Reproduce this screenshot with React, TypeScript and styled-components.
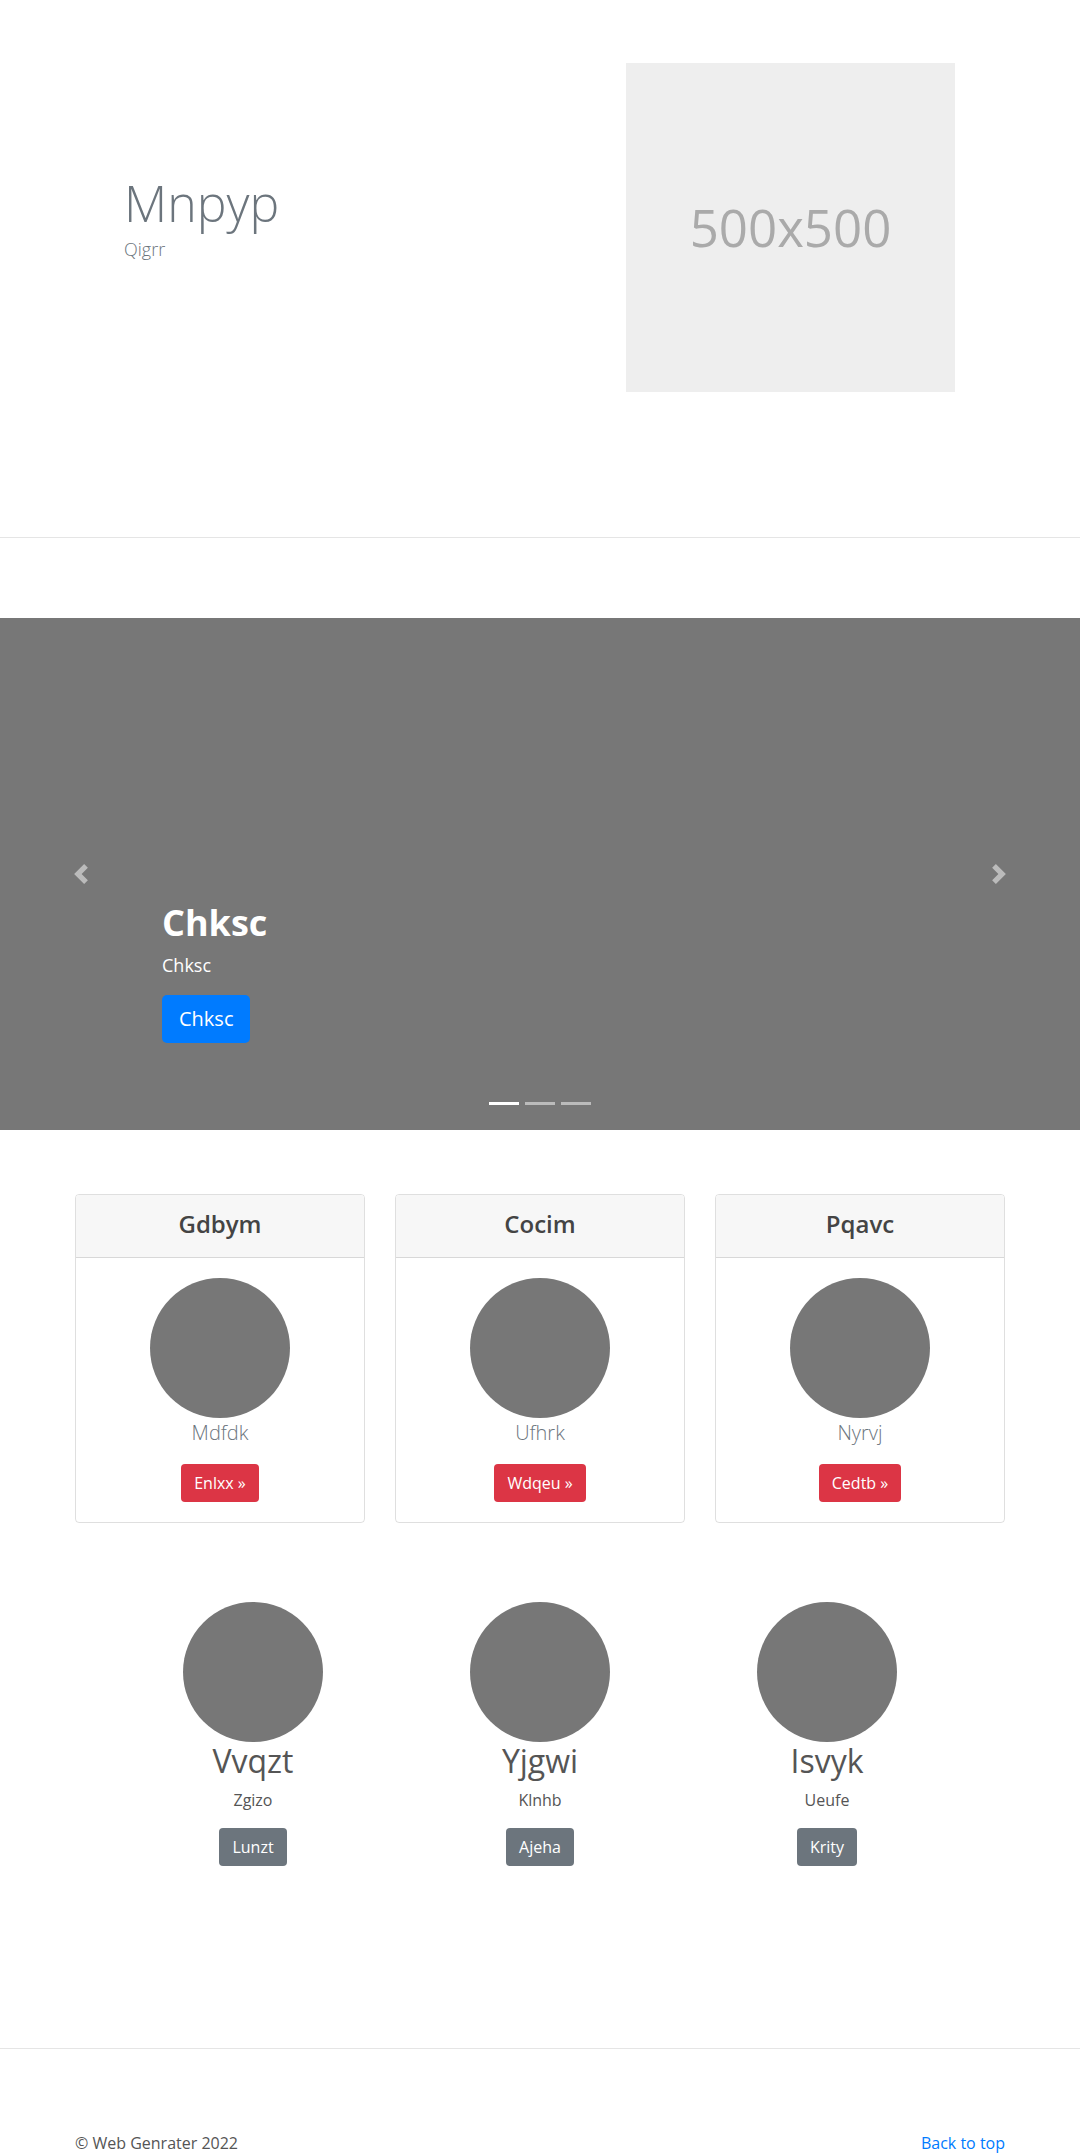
import * as React from 'react'
import styled, { createGlobalStyle } from 'styled-components'

const GlobalStyle = createGlobalStyle`
  html, body {
    margin: 0;
    padding: 0;
    background: #fff;
  }

  body {
    font-family: 'Open Sans', 'Noto Sans', Arial, sans-serif;
    font-size: 16px;
    line-height: 1.5;
    color: #212529;
  }

  * {
    box-sizing: border-box;
  }
`

const Page = styled.div`
  width: 100%;
  overflow: hidden;
`

const Container = styled.div`
  width: 960px;
  margin: 0 auto;
  padding: 0 15px;
`

// hero

const Hero = styled(Container)`
  display: flex;
  justify-content: space-between;
  padding-top: 63px;
  padding-bottom: 65px;
`

const HeroText = styled.div`
  padding-top: 110px;
  padding-left: 49px;
`

const HeroTitle = styled.h1`
  margin: 0 0 3px;
  font-size: 50px;
  line-height: 1.2;
  font-weight: 300;
  color: #6c757d;
`

const HeroLead = styled.p`
  margin: 0;
  font-size: 18px;
  font-weight: 300;
  color: #6c757d;
`

const Placeholder = styled.div`
  width: 329px;
  height: 329px;
  margin-right: 50px;
  background: #eee;
  color: #aaa;
  display: flex;
  align-items: center;
  justify-content: center;
  font-size: 51px;
  line-height: 1;
`

const Divider = styled.hr<{ top: number; bottom: number }>`
  margin: ${(p) => p.top}px 0 ${(p) => p.bottom}px;
  border: 0;
  border-top: 1px solid rgba(0, 0, 0, 0.1);
`

// carousel

const Carousel = styled.div`
  position: relative;
  height: 512px;
  background: #777;
  margin-bottom: 64px;
`

const Control = styled.div<{ side: 'left' | 'right' }>`
  position: absolute;
  top: 0;
  bottom: 0;
  ${(p) => p.side}: 0;
  width: 15%;
  display: flex;
  align-items: center;
  justify-content: center;
  opacity: 0.5;
`

const Caption = styled.div`
  position: absolute;
  left: 15%;
  right: 15%;
  bottom: 87px;
  color: #fff;
  text-align: left;
`

const CaptionTitle = styled.h1`
  margin: 0 0 8px;
  font-size: 36px;
  line-height: 1.2;
  font-weight: 700;
`

const CaptionText = styled.p`
  margin: 0 0 16px;
  font-size: 18px;
`

const Button = styled.a<{ variant: 'primary' | 'danger' | 'secondary'; large?: boolean }>`
  display: inline-block;
  color: #fff;
  text-decoration: none;
  border-radius: ${(p) => (p.large ? '5px' : '4px')};
  padding: ${(p) => (p.large ? '8px 16px' : '6px 12px')};
  font-size: ${(p) => (p.large ? '20px' : '16px')};
  line-height: 1.5;
  border: 1px solid transparent;
  background: ${(p) =>
    p.variant === 'primary'
      ? '#007bff'
      : p.variant === 'danger'
      ? '#dc3545'
      : '#6c757d'};
`

const Indicators = styled.ol`
  position: absolute;
  left: 0;
  right: 0;
  bottom: 25px;
  margin: 0;
  padding: 0;
  list-style: none;
  display: flex;
  justify-content: center;
  gap: 6px;
`

const Indicator = styled.li<{ active?: boolean }>`
  width: 30px;
  height: 3px;
  background: ${(p) => (p.active ? '#fff' : 'rgba(255, 255, 255, 0.5)')};
`

// cards

const CardRow = styled(Container)`
  display: grid;
  grid-template-columns: repeat(3, 1fr);
  gap: 30px;
`

const Card = styled.div`
  border: 1px solid rgba(0, 0, 0, 0.125);
  border-radius: 4px;
  overflow: hidden;
  text-align: center;
`

const CardHeader = styled.div`
  background: #f7f7f7;
  border-bottom: 1px solid rgba(0, 0, 0, 0.125);
  padding: 15px 20px 12px;
`

const CardTitle = styled.h4`
  margin: 0 0 6px;
  font-size: 24px;
  line-height: 1.2;
  font-weight: 600;
  color: #444;
`

const CardBody = styled.div`
  padding: 20px;
  display: flex;
  flex-direction: column;
  align-items: center;
`

const Circle = styled.div`
  width: 140px;
  height: 140px;
  border-radius: 50%;
  background: #777;
`

const CardLead = styled.p`
  margin: 0 0 16px;
  font-size: 20px;
  font-weight: 300;
  color: #6c757d;
`

// marketing

const Marketing = styled.div`
  display: grid;
  grid-template-columns: repeat(3, 287px);
  justify-content: center;
  margin-top: 79px;
`

const Column = styled.div`
  display: flex;
  flex-direction: column;
  align-items: center;
  text-align: center;
`

const ColumnTitle = styled.h2`
  margin: 0 0 8px;
  font-size: 32px;
  line-height: 1.2;
  font-weight: 400;
  color: #555;
`

const ColumnText = styled.p`
  margin: 0 0 16px;
  color: #555;
`

// footer

const Footer = styled(Container)`
  display: flex;
  justify-content: space-between;
  color: #555;
`

const FooterLink = styled.a`
  color: #007bff;
  text-decoration: none;
`

const Chevron: React.FC<{ dir: 'left' | 'right' }> = ({ dir }) => (
  <svg width="20" height="20" viewBox="0 0 8 8" fill="#fff">
    {dir === 'left' ? (
      <path d="M5.25 0l-4 4 4 4 1.5-1.5L4.25 4l2.5-2.5L5.25 0z" />
    ) : (
      <path d="M2.75 0l-1.5 1.5L3.75 4l-2.5 2.5L2.75 8l4-4-4-4z" />
    )}
  </svg>
)

const pricing = [
  { title: 'Gdbym', lead: 'Mdfdk', action: 'Enlxx' },
  { title: 'Cocim', lead: 'Ufhrk', action: 'Wdqeu' },
  { title: 'Pqavc', lead: 'Nyrvj', action: 'Cedtb' },
]

const features = [
  { title: 'Vvqzt', text: 'Zgizo', action: 'Lunzt' },
  { title: 'Yjgwi', text: 'Klnhb', action: 'Ajeha' },
  { title: 'Isvyk', text: 'Ueufe', action: 'Krity' },
]

export default function App() {
  return (
    <Page>
      <GlobalStyle />

      <Hero>
        <HeroText>
          <HeroTitle>Mnpyp</HeroTitle>
          <HeroLead>Qigrr</HeroLead>
        </HeroText>
        <Placeholder>500x500</Placeholder>
      </Hero>

      <Divider top={80} bottom={80} />

      <Carousel>
        <Control side="left">
          <Chevron dir="left" />
        </Control>
        <Control side="right">
          <Chevron dir="right" />
        </Control>
        <Caption>
          <CaptionTitle>Chksc</CaptionTitle>
          <CaptionText>Chksc</CaptionText>
          <Button variant="primary" large href="#">
            Chksc
          </Button>
        </Caption>
        <Indicators>
          <Indicator active />
          <Indicator />
          <Indicator />
        </Indicators>
      </Carousel>

      <CardRow>
        {pricing.map((item) => (
          <Card key={item.title}>
            <CardHeader>
              <CardTitle>{item.title}</CardTitle>
            </CardHeader>
            <CardBody>
              <Circle />
              <CardLead>{item.lead}</CardLead>
              <Button variant="danger" href="#">
                {item.action} &raquo;
              </Button>
            </CardBody>
          </Card>
        ))}
      </CardRow>

      <Marketing>
        {features.map((item) => (
          <Column key={item.title}>
            <Circle />
            <ColumnTitle>{item.title}</ColumnTitle>
            <ColumnText>{item.text}</ColumnText>
            <Button variant="secondary" href="#">
              {item.action}
            </Button>
          </Column>
        ))}
      </Marketing>

      <Divider top={182} bottom={82} />

      <Footer>
        <span>&copy; Web Genrater 2022</span>
        <FooterLink href="#">Back to top</FooterLink>
      </Footer>
    </Page>
  )
}
